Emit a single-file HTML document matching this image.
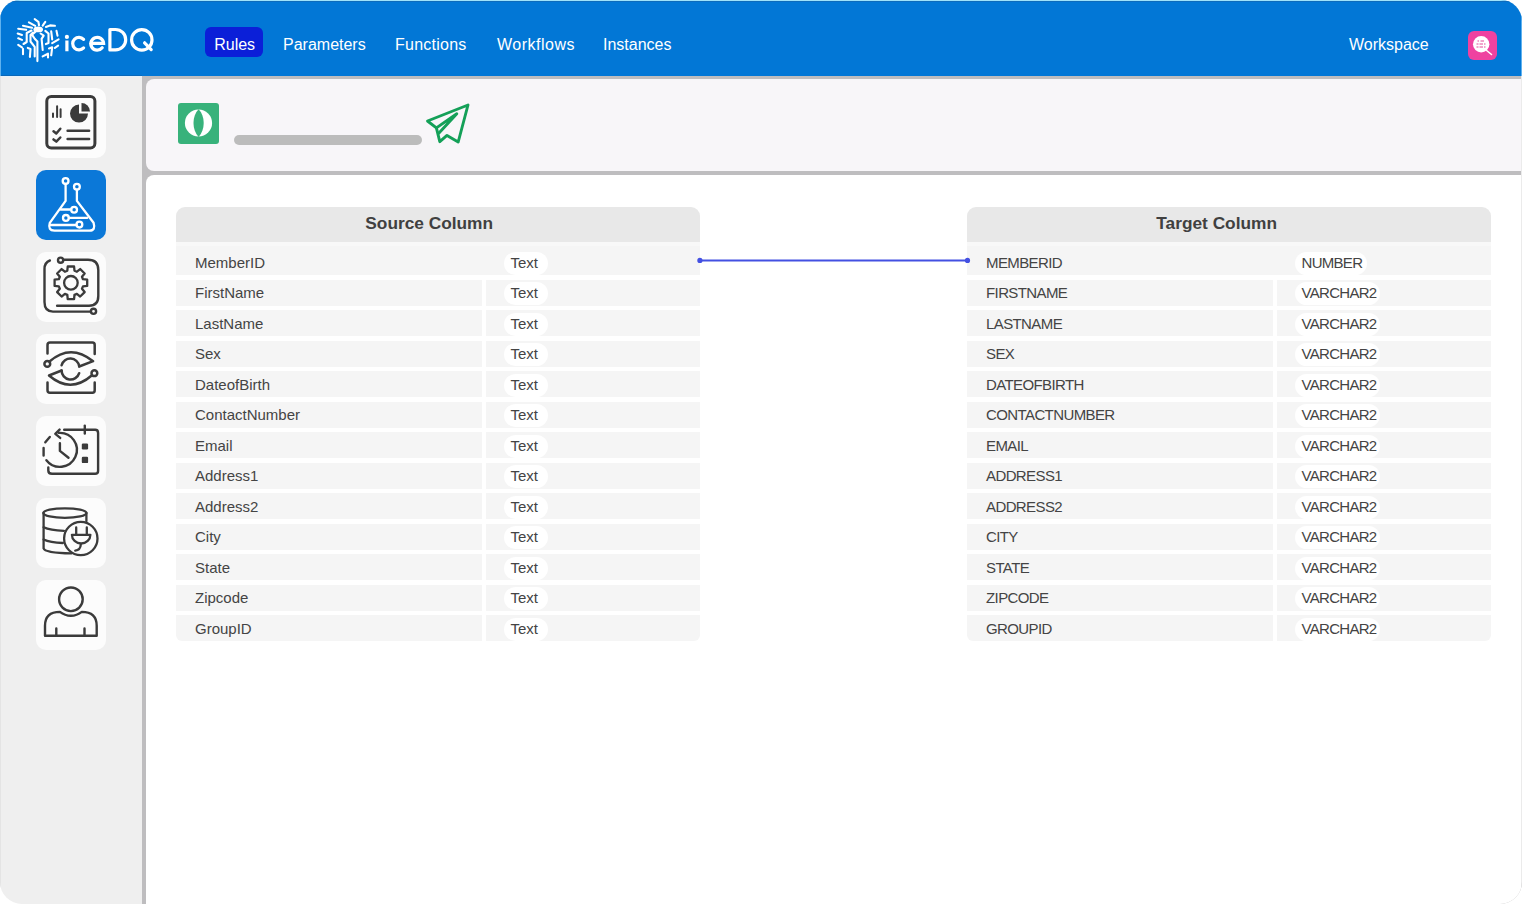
<!DOCTYPE html>
<html><head><meta charset="utf-8">
<style>
html,body{margin:0;padding:0;background:#fff;}
body{width:1522px;height:904px;overflow:hidden;position:relative;font-family:"Liberation Sans", sans-serif;}
.a{position:absolute;}
#win{position:absolute;left:0;top:0;width:1522px;height:904px;border-radius:20px 21px 22px 22px;overflow:hidden;background:#efefef;}
#hdr{position:absolute;left:0;top:0;width:1522px;height:76px;background:#0277d6;}
.nav{position:absolute;top:35px;height:20px;line-height:20px;font-size:16px;color:#fff;white-space:nowrap;}
.card{position:absolute;left:36px;width:70px;height:70px;border-radius:10px;background:#fcfcfc;}
.ic{position:absolute;left:26px;width:90px;height:90px;}
.hd{position:absolute;height:35px;background:#e8e8e8;border-radius:9px 9px 0 0;}
.ht{position:absolute;top:212.4px;height:22px;line-height:22px;font-size:17.3px;font-weight:bold;color:#404040;white-space:nowrap;}
.row{position:absolute;background:#f5f5f5;}
.tx{position:absolute;font-size:15px;line-height:18px;height:18px;color:#444;white-space:nowrap;}
.pill{position:absolute;background:#fff;border-radius:12px;}
</style></head><body>
<div id="win">
<div id="hdr"></div><div class="a" style="left:0;top:0;width:1522px;height:1px;background:#9fe2fa"></div><div class="a" style="left:0;top:1px;width:1522px;height:1px;background:#0d6bbb"></div><div class="a" style="left:0;top:74.5px;width:142px;height:1px;background:#0a68b9"></div><div class="a" style="left:0;top:76px;width:142px;height:1px;background:#e6f2fb"></div>

<div class="a" style="left:205px;top:27px;width:58px;height:30px;border-radius:6px;background:#0b1fd8;"></div>
<div class="nav" style="left:214.2px;">Rules</div>
<div class="nav" style="left:283px;">Parameters</div>
<div class="nav" style="left:395px;letter-spacing:0.25px;">Functions</div>
<div class="nav" style="left:497px;letter-spacing:0.5px;">Workflows</div>
<div class="nav" style="left:603px;">Instances</div>
<div class="nav" style="left:1349px;">Workspace</div>
<svg class="a" style="left:60px;top:20px" width="100" height="40" fill="none" stroke="#fff" stroke-width="3.2" stroke-linecap="round"><circle cx="66.9" cy="36.9" r="2.1" fill="#fff" stroke="none" transform="translate(-60 -20)"/><g transform="translate(-60 -20)"><path d="M66.9 40.6V51.3" stroke-linecap="butt" transform="translate(0 0)"/><path d="M83.6 39.3A6.3 6.3 0 1 0 83.6 47.9"/><path d="M90.6 43.4H103.6A6.4 6.4 0 1 0 102.2 47.8"/><path d="M109.9 29.5V49.9H115.5A10.2 10.2 0 0 0 115.5 29.5Z" stroke-linejoin="round"/><circle cx="141.8" cy="39.9" r="10.2"/><path d="M144.6 42.8L151.2 49.6"/></g></svg>
<svg class="a" style="left:0;top:0" width="64" height="70" fill="none" stroke="#fff" stroke-width="2.1" stroke-linecap="round" stroke-linejoin="round"><ellipse cx="38.2" cy="29.4" rx="3.8" ry="1.9" fill="#fff"/><path d="M34.7 19.2L38.4 21.8L39 25.3M28.9 22.4L35.2 25.8M45.3 21.8L42.7 25.6M23 25.8L32 27.7M45.9 26.9L50 25.4L54.9 25.8"/><path d="M18.2 28.7L26.2 29.8M17.7 33.5L22 34.9M18.2 38.3L22 39.9M18.2 44.9L22 47.3"/><path d="M56.5 30.9L57.5 35.6M58.6 39.4L52.2 43.1M58.1 45.7L54.9 47.9"/><path d="M31.5 30.5L26.7 33V42L23.5 44M33 32.5L30.5 35V41.5L34.7 46.8V56.4M35.2 31.9L32 34.6L34.7 38.8L37.4 41.5V61.1M40.6 33.5L43.7 35.6L41.6 38.8L42.7 50M45.3 30.9L48.5 33.5V43.1L45.9 44.1M51.2 31.4L52.2 39.4"/><path d="M23 48.9V54.2M27.8 47.9L30.5 48.9L29.9 56.9M42.7 56.4L48 53.7V57.4M49 48.4L52.2 47.3L51.2 55.3"/></svg>
<div class="a" style="left:1468px;top:30.5px;width:29px;height:29px;border-radius:6px;background:#ef42a0;"></div>
<svg class="a" style="left:1460px;top:22px" width="45" height="45" fill="none"><circle cx="21.2" cy="22.3" r="8.2" fill="#fff"/><path d="M26 28L31.5 32.5" stroke="#fff" stroke-width="1.6" stroke-linecap="round"/><path d="M17.5 19H19M20.5 19H24M16.5 22H18.5M19.5 22H23M24 22H25.5M16.5 25H18.5M19.5 25H23M24 25H25.5" stroke="#e64a9a" stroke-width="1.2"/></svg>
<div class="a" style="left:142px;top:76px;width:1380px;height:828px;background:#bebdbf;"></div>
<div class="a" style="left:146px;top:79px;width:1374.5px;height:92px;background:#f8f6f9;border-radius:8px 0 0 8px;"></div>
<div class="a" style="left:146px;top:175px;width:1374.5px;height:729px;background:#fff;border-radius:8px 0 0 0;"></div>
<div class="a" style="left:1520.5px;top:76px;width:1.5px;height:828px;background:#ebebeb;"></div>
<div class="a" style="left:1521px;top:0;width:1px;height:76px;background:#5fb2ef;"></div>
<div class="a" style="left:0;top:0;width:1px;height:76px;background:#5fb2ef;"></div>
<div class="a" style="left:0;top:76px;width:1px;height:828px;background:#e4e4e4;"></div>
<div class="a" style="left:178px;top:102.5px;width:41px;height:41px;border-radius:3px;background:#38b27b;"></div>
<svg class="a" style="left:170px;top:95px" width="60" height="55"><ellipse cx="28.5" cy="28" rx="13.6" ry="13.4" fill="#fff"/><path d="M28.6 14.3C35.4 21 35.4 35 28.6 42C21.8 35 21.8 21 28.6 14.3Z" fill="#38b27b"/></svg>
<svg class="a" style="left:420px;top:98px" width="56" height="52" fill="none" stroke="#14a058" stroke-width="2.9" stroke-linejoin="round" stroke-linecap="round"><path d="M48 7L7.5 23L16.4 29.9L19.8 43.7L27 37.4L38.2 44Z"/><path d="M16.4 29.9L36.8 15.8L19 35"/></svg>
<div class="a" style="left:234px;top:134.5px;width:188px;height:10px;border-radius:5px;background:#bcbcbc;"></div>
<div class="card" style="top:88px;background:#fcfcfc"></div>
<div class="card" style="top:170px;background:#0b78d8"></div>
<div class="card" style="top:252px;background:#fcfcfc"></div>
<div class="card" style="top:334px;background:#fcfcfc"></div>
<div class="card" style="top:416px;background:#fcfcfc"></div>
<div class="card" style="top:498px;background:#fcfcfc"></div>
<div class="card" style="top:580px;background:#fcfcfc"></div>
<svg class="a" style="left:0;top:0" width="142" height="904" viewBox="0 0 142 904" fill="none" stroke="#3b3b3b" stroke-linecap="round" stroke-linejoin="round"><rect x="46.8" y="96.5" width="48.1" height="51.4" rx="4.5" stroke-width="3"/><path d="M53 113.6V117M57.1 106.3V117M60.6 109.3V117" stroke-width="2"/><path d="M79 113.6 L79 104.6 A9 9 0 1 0 88 113.6 Z" fill="#3b3b3b" stroke="none"/><path d="M81.5 111.6 L81.5 103.1 A8.5 8.5 0 0 1 90 111.6 Z" fill="#3b3b3b" stroke="none"/><path d="M53.5 131.2L56.3 133.5L60.3 128.8M53.5 139.4L56.3 141.6L60.3 137.5M67.6 130.8H89.1M67.6 139.1H89.1" stroke-width="2.5"/><g stroke="#fff" stroke-width="2.3"><circle cx="65.6" cy="181.1" r="2.9"/><circle cx="76.9" cy="186.7" r="2.9"/><path d="M65.6 184V200.9L49.8 222.8Q47.5 230.6 54.5 230.6H89.5Q96 230.6 93.6 222.8L76.9 200.9V189.6"/><path d="M50.5 225H76.5"/><circle cx="79.4" cy="224.6" r="2.9"/><circle cx="65.9" cy="217.9" r="2.9"/><path d="M68.8 217.9H87.2"/><circle cx="74.1" cy="209.7" r="2.9"/><path d="M60.5 209.5H71.2"/></g><g stroke-width="2.4"><path d="M49.9 260.5Q44.5 262.5 44.5 269V302Q44.5 311.6 53 311.6H90.8"/><circle cx="93.5" cy="311.3" r="2.6"/><circle cx="60.6" cy="260.2" r="2.6"/><path d="M63.6 259.8H88Q98.3 259.8 98.3 270V296Q98.3 305.8 89 305.8H57.1"/><path d="M67.32 270.72 L67.73 266.50 L74.07 266.50 L74.48 270.72 L76.91 271.73 L80.18 269.04 L84.66 273.52 L81.97 276.79 L82.98 279.22 L87.20 279.63 L87.20 285.97 L82.98 286.38 L81.97 288.81 L84.66 292.08 L80.18 296.56 L76.91 293.87 L74.48 294.88 L74.07 299.10 L67.73 299.10 L67.32 294.88 L64.89 293.87 L61.62 296.56 L57.14 292.08 L59.83 288.81 L58.82 286.38 L54.60 285.97 L54.60 279.63 L58.82 279.22 L59.83 276.79 L57.14 273.52 L61.62 269.04 L64.89 271.73Z" stroke-width="2.3"/><circle cx="70.9" cy="282.8" r="6.8" stroke-width="2.3"/></g><g stroke-width="2.5"><path d="M47.5 353.6V345Q47.5 342.6 50 342.6H92.4Q94.7 342.6 94.7 345V353.9"/><path d="M47.5 382.5V390.2Q47.5 392.7 50 392.7H92.4Q94.7 392.7 94.7 390.2V382.5"/><circle cx="47.3" cy="363.9" r="2.9"/><circle cx="94.4" cy="373.2" r="2.9"/><path d="M49.5 361.5Q70.5 343 93.1 361.2L79.2 366.5"/><path d="M61.6 365.2A9 9 0 0 1 79.2 366.2"/><path d="M61.6 370.5L49 375.5Q70.5 394 92 375.2"/><path d="M61.6 370.5A9 9 0 0 0 79.2 373.2"/></g><g stroke-width="2.4"><path d="M64.2 429.8H95.2Q98.1 429.8 98.1 433V471Q98.1 473.75 95.1 473.75H52Q48.3 473.75 48.3 470.4V467.4"/><path d="M84.8 425.6V433.6"/><rect x="81.8" y="443.6" width="6.3" height="5.9" rx="1.2" fill="#3b3b3b" stroke="none"/><rect x="81.8" y="456.8" width="6.3" height="6.3" rx="1.2" fill="#3b3b3b" stroke="none"/><path d="M58.7 432.9A17 17 0 1 1 46.4 460.2"/><path d="M43.6 448V455.5M45.3 442.3L49.8 436.9"/><path d="M59.6 429.6L55.3 433.9L60.2 437.9"/><path d="M59.9 443.2V450.9L68.5 457.8"/></g><g stroke-width="2.3"><ellipse cx="64.9" cy="513.1" rx="21.6" ry="4.8"/><path d="M43.6 513V548.4Q45 553 71.5 553.4M86.4 513V521.2"/><path d="M43.6 527.2Q50 530.2 63.9 530.8M43.6 539.5Q50 542.5 62.9 543"/><circle cx="80.8" cy="538.5" r="16.7"/><path d="M76.2 527.5V534.5M86.8 527.5V534.5"/><path d="M71.9 534.8H90.4A9.25 8.7 0 0 1 71.9 534.8Z"/><path d="M80.8 544.5Q80.5 550 75.2 550.6"/></g><g stroke-width="2.4"><circle cx="70.9" cy="599.3" r="11.8"/><path d="M45 635.75V625.8Q45 611.9 59.9 611.9Q65 615.8 70.9 615.8Q76.8 615.8 81.8 611.9Q96.7 611.9 96.7 625.8V635.75Z"/><path d="M56.3 628.4V635M84.5 628.4V635"/></g></svg>
<div class="hd" style="left:176px;top:207px;width:524px;"></div>
<div class="ht" style="left:365.3px;">Source Column</div>
<div class="row" style="left:176px;top:242px;width:524px;height:4px;background:#f8f8f8;"></div>
<div class="row" style="left:176px;top:246px;width:524px;height:29px;"></div>
<div class="row" style="left:176px;top:279.70px;width:306px;height:26px;"></div>
<div class="row" style="left:486px;top:279.70px;width:214px;height:26px;"></div>
<div class="row" style="left:176px;top:310.20px;width:306px;height:26px;"></div>
<div class="row" style="left:486px;top:310.20px;width:214px;height:26px;"></div>
<div class="row" style="left:176px;top:340.70px;width:306px;height:26px;"></div>
<div class="row" style="left:486px;top:340.70px;width:214px;height:26px;"></div>
<div class="row" style="left:176px;top:371.20px;width:306px;height:26px;"></div>
<div class="row" style="left:486px;top:371.20px;width:214px;height:26px;"></div>
<div class="row" style="left:176px;top:401.70px;width:306px;height:26px;"></div>
<div class="row" style="left:486px;top:401.70px;width:214px;height:26px;"></div>
<div class="row" style="left:176px;top:432.20px;width:306px;height:26px;"></div>
<div class="row" style="left:486px;top:432.20px;width:214px;height:26px;"></div>
<div class="row" style="left:176px;top:462.70px;width:306px;height:26px;"></div>
<div class="row" style="left:486px;top:462.70px;width:214px;height:26px;"></div>
<div class="row" style="left:176px;top:493.20px;width:306px;height:26px;"></div>
<div class="row" style="left:486px;top:493.20px;width:214px;height:26px;"></div>
<div class="row" style="left:176px;top:523.70px;width:306px;height:26px;"></div>
<div class="row" style="left:486px;top:523.70px;width:214px;height:26px;"></div>
<div class="row" style="left:176px;top:554.20px;width:306px;height:26px;"></div>
<div class="row" style="left:486px;top:554.20px;width:214px;height:26px;"></div>
<div class="row" style="left:176px;top:584.70px;width:306px;height:26px;"></div>
<div class="row" style="left:486px;top:584.70px;width:214px;height:26px;"></div>
<div class="row" style="left:176px;top:615.20px;width:306px;height:26px;border-radius:0 0 0 6px;"></div>
<div class="row" style="left:486px;top:615.20px;width:214px;height:26px;border-radius:0 0 6px 0;"></div>
<div class="pill" style="left:504px;top:251.50px;width:44px;height:23px;"></div>
<div class="tx" style="left:195px;top:254.00px;">MemberID</div>
<div class="tx" style="left:510.5px;top:254.00px;">Text</div>
<div class="pill" style="left:504px;top:282.30px;width:44px;height:23px;"></div>
<div class="tx" style="left:195px;top:284.30px;">FirstName</div>
<div class="tx" style="left:510.5px;top:284.30px;">Text</div>
<div class="pill" style="left:504px;top:312.80px;width:44px;height:23px;"></div>
<div class="tx" style="left:195px;top:314.80px;">LastName</div>
<div class="tx" style="left:510.5px;top:314.80px;">Text</div>
<div class="pill" style="left:504px;top:343.30px;width:44px;height:23px;"></div>
<div class="tx" style="left:195px;top:345.30px;">Sex</div>
<div class="tx" style="left:510.5px;top:345.30px;">Text</div>
<div class="pill" style="left:504px;top:373.80px;width:44px;height:23px;"></div>
<div class="tx" style="left:195px;top:375.80px;">DateofBirth</div>
<div class="tx" style="left:510.5px;top:375.80px;">Text</div>
<div class="pill" style="left:504px;top:404.30px;width:44px;height:23px;"></div>
<div class="tx" style="left:195px;top:406.30px;">ContactNumber</div>
<div class="tx" style="left:510.5px;top:406.30px;">Text</div>
<div class="pill" style="left:504px;top:434.80px;width:44px;height:23px;"></div>
<div class="tx" style="left:195px;top:436.80px;">Email</div>
<div class="tx" style="left:510.5px;top:436.80px;">Text</div>
<div class="pill" style="left:504px;top:465.30px;width:44px;height:23px;"></div>
<div class="tx" style="left:195px;top:467.30px;">Address1</div>
<div class="tx" style="left:510.5px;top:467.30px;">Text</div>
<div class="pill" style="left:504px;top:495.80px;width:44px;height:23px;"></div>
<div class="tx" style="left:195px;top:497.80px;">Address2</div>
<div class="tx" style="left:510.5px;top:497.80px;">Text</div>
<div class="pill" style="left:504px;top:526.30px;width:44px;height:23px;"></div>
<div class="tx" style="left:195px;top:528.30px;">City</div>
<div class="tx" style="left:510.5px;top:528.30px;">Text</div>
<div class="pill" style="left:504px;top:556.80px;width:44px;height:23px;"></div>
<div class="tx" style="left:195px;top:558.80px;">State</div>
<div class="tx" style="left:510.5px;top:558.80px;">Text</div>
<div class="pill" style="left:504px;top:587.30px;width:44px;height:23px;"></div>
<div class="tx" style="left:195px;top:589.30px;">Zipcode</div>
<div class="tx" style="left:510.5px;top:589.30px;">Text</div>
<div class="pill" style="left:504px;top:617.80px;width:44px;height:23px;"></div>
<div class="tx" style="left:195px;top:619.80px;">GroupID</div>
<div class="tx" style="left:510.5px;top:619.80px;">Text</div>
<div class="hd" style="left:967px;top:207px;width:524px;"></div>
<div class="ht" style="left:1156.3px;">Target Column</div>
<div class="row" style="left:967px;top:242px;width:524px;height:4px;background:#f8f8f8;"></div>
<div class="row" style="left:967px;top:246px;width:524px;height:29px;"></div>
<div class="row" style="left:967px;top:279.70px;width:306px;height:26px;"></div>
<div class="row" style="left:1277px;top:279.70px;width:214px;height:26px;"></div>
<div class="row" style="left:967px;top:310.20px;width:306px;height:26px;"></div>
<div class="row" style="left:1277px;top:310.20px;width:214px;height:26px;"></div>
<div class="row" style="left:967px;top:340.70px;width:306px;height:26px;"></div>
<div class="row" style="left:1277px;top:340.70px;width:214px;height:26px;"></div>
<div class="row" style="left:967px;top:371.20px;width:306px;height:26px;"></div>
<div class="row" style="left:1277px;top:371.20px;width:214px;height:26px;"></div>
<div class="row" style="left:967px;top:401.70px;width:306px;height:26px;"></div>
<div class="row" style="left:1277px;top:401.70px;width:214px;height:26px;"></div>
<div class="row" style="left:967px;top:432.20px;width:306px;height:26px;"></div>
<div class="row" style="left:1277px;top:432.20px;width:214px;height:26px;"></div>
<div class="row" style="left:967px;top:462.70px;width:306px;height:26px;"></div>
<div class="row" style="left:1277px;top:462.70px;width:214px;height:26px;"></div>
<div class="row" style="left:967px;top:493.20px;width:306px;height:26px;"></div>
<div class="row" style="left:1277px;top:493.20px;width:214px;height:26px;"></div>
<div class="row" style="left:967px;top:523.70px;width:306px;height:26px;"></div>
<div class="row" style="left:1277px;top:523.70px;width:214px;height:26px;"></div>
<div class="row" style="left:967px;top:554.20px;width:306px;height:26px;"></div>
<div class="row" style="left:1277px;top:554.20px;width:214px;height:26px;"></div>
<div class="row" style="left:967px;top:584.70px;width:306px;height:26px;"></div>
<div class="row" style="left:1277px;top:584.70px;width:214px;height:26px;"></div>
<div class="row" style="left:967px;top:615.20px;width:306px;height:26px;border-radius:0 0 0 6px;"></div>
<div class="row" style="left:1277px;top:615.20px;width:214px;height:26px;border-radius:0 0 6px 0;"></div>
<div class="pill" style="left:1295px;top:251.50px;width:72px;height:23px;"></div>
<div class="tx" style="left:986px;top:254.00px;letter-spacing:-0.6px;">MEMBERID</div>
<div class="tx" style="left:1301.5px;top:254.00px;letter-spacing:-0.7px;">NUMBER</div>
<div class="pill" style="left:1295px;top:282.30px;width:85px;height:23px;"></div>
<div class="tx" style="left:986px;top:284.30px;letter-spacing:-0.6px;">FIRSTNAME</div>
<div class="tx" style="left:1301.5px;top:284.30px;letter-spacing:-0.7px;">VARCHAR2</div>
<div class="pill" style="left:1295px;top:312.80px;width:85px;height:23px;"></div>
<div class="tx" style="left:986px;top:314.80px;letter-spacing:-0.6px;">LASTNAME</div>
<div class="tx" style="left:1301.5px;top:314.80px;letter-spacing:-0.7px;">VARCHAR2</div>
<div class="pill" style="left:1295px;top:343.30px;width:85px;height:23px;"></div>
<div class="tx" style="left:986px;top:345.30px;letter-spacing:-0.6px;">SEX</div>
<div class="tx" style="left:1301.5px;top:345.30px;letter-spacing:-0.7px;">VARCHAR2</div>
<div class="pill" style="left:1295px;top:373.80px;width:85px;height:23px;"></div>
<div class="tx" style="left:986px;top:375.80px;letter-spacing:-0.6px;">DATEOFBIRTH</div>
<div class="tx" style="left:1301.5px;top:375.80px;letter-spacing:-0.7px;">VARCHAR2</div>
<div class="pill" style="left:1295px;top:404.30px;width:85px;height:23px;"></div>
<div class="tx" style="left:986px;top:406.30px;letter-spacing:-0.6px;">CONTACTNUMBER</div>
<div class="tx" style="left:1301.5px;top:406.30px;letter-spacing:-0.7px;">VARCHAR2</div>
<div class="pill" style="left:1295px;top:434.80px;width:85px;height:23px;"></div>
<div class="tx" style="left:986px;top:436.80px;letter-spacing:-0.6px;">EMAIL</div>
<div class="tx" style="left:1301.5px;top:436.80px;letter-spacing:-0.7px;">VARCHAR2</div>
<div class="pill" style="left:1295px;top:465.30px;width:85px;height:23px;"></div>
<div class="tx" style="left:986px;top:467.30px;letter-spacing:-0.6px;">ADDRESS1</div>
<div class="tx" style="left:1301.5px;top:467.30px;letter-spacing:-0.7px;">VARCHAR2</div>
<div class="pill" style="left:1295px;top:495.80px;width:85px;height:23px;"></div>
<div class="tx" style="left:986px;top:497.80px;letter-spacing:-0.6px;">ADDRESS2</div>
<div class="tx" style="left:1301.5px;top:497.80px;letter-spacing:-0.7px;">VARCHAR2</div>
<div class="pill" style="left:1295px;top:526.30px;width:85px;height:23px;"></div>
<div class="tx" style="left:986px;top:528.30px;letter-spacing:-0.6px;">CITY</div>
<div class="tx" style="left:1301.5px;top:528.30px;letter-spacing:-0.7px;">VARCHAR2</div>
<div class="pill" style="left:1295px;top:556.80px;width:85px;height:23px;"></div>
<div class="tx" style="left:986px;top:558.80px;letter-spacing:-0.6px;">STATE</div>
<div class="tx" style="left:1301.5px;top:558.80px;letter-spacing:-0.7px;">VARCHAR2</div>
<div class="pill" style="left:1295px;top:587.30px;width:85px;height:23px;"></div>
<div class="tx" style="left:986px;top:589.30px;letter-spacing:-0.6px;">ZIPCODE</div>
<div class="tx" style="left:1301.5px;top:589.30px;letter-spacing:-0.7px;">VARCHAR2</div>
<div class="pill" style="left:1295px;top:617.80px;width:85px;height:23px;"></div>
<div class="tx" style="left:986px;top:619.80px;letter-spacing:-0.6px;">GROUPID</div>
<div class="tx" style="left:1301.5px;top:619.80px;letter-spacing:-0.7px;">VARCHAR2</div>
<svg class="a" style="left:690px;top:250px;" width="290" height="20"><line x1="10" y1="10.4" x2="277.5" y2="10.4" stroke="#4350e2" stroke-width="2"/><circle cx="9.9" cy="10.4" r="2.6" fill="#4350e2"/><circle cx="277.5" cy="10.4" r="2.6" fill="#4350e2"/></svg>
</div></body></html>
